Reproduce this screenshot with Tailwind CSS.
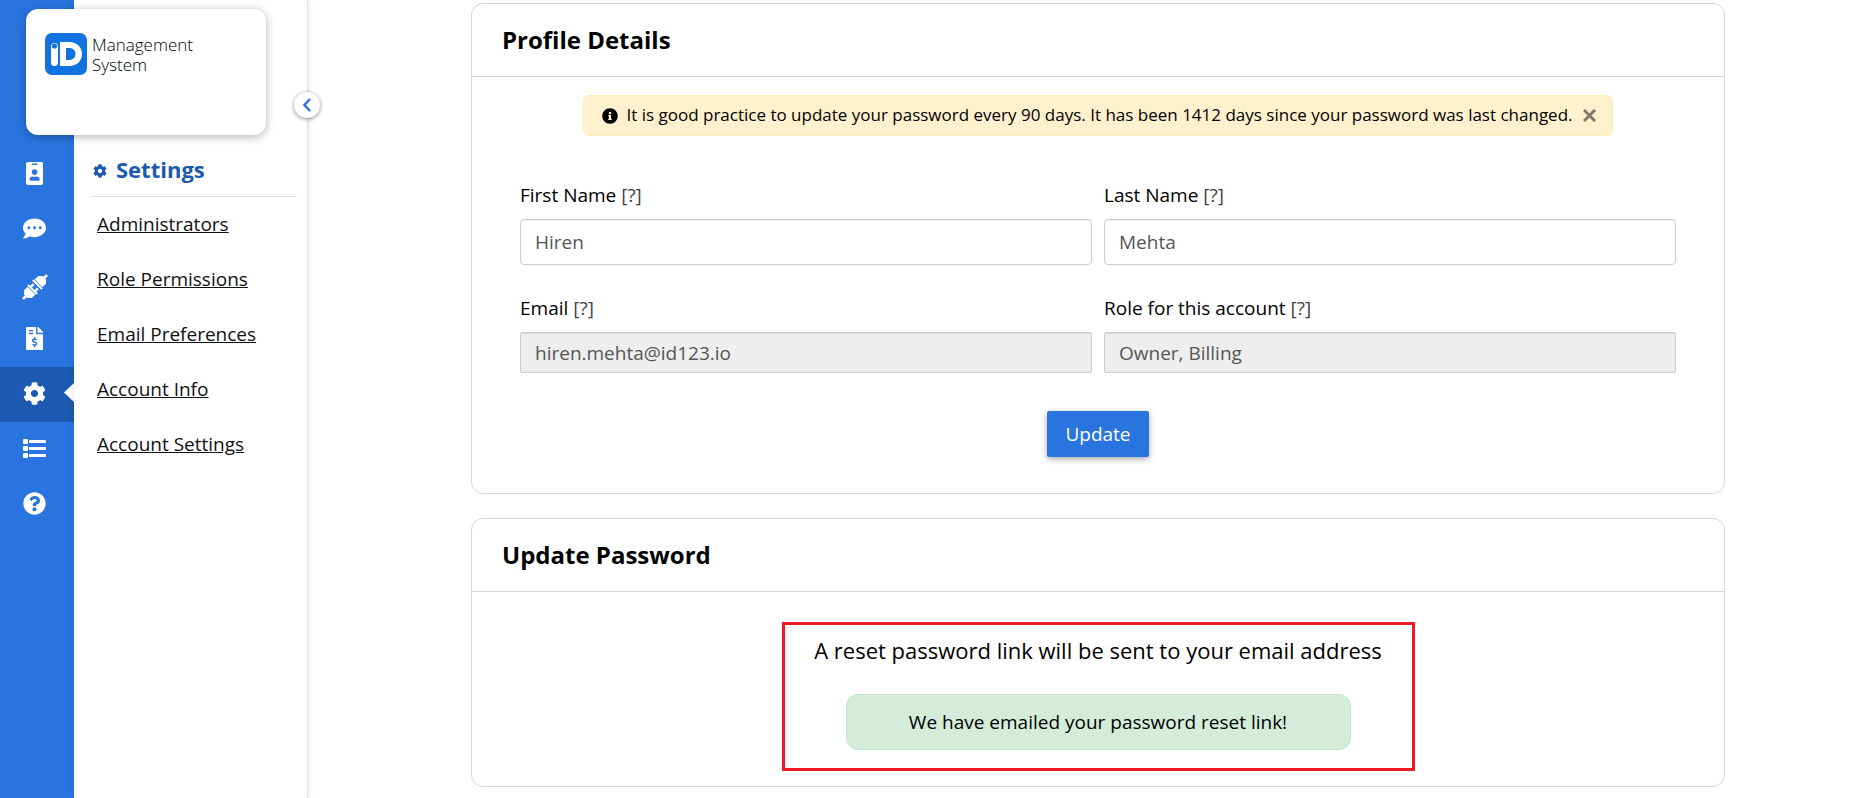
<!DOCTYPE html>
<html lang="en">
<head>
<meta charset="utf-8">
<meta name="viewport" content="width=device-width, initial-scale=1">
<title>Profile Details</title>
<script src="https://cdn.jsdelivr.net/npm/@tailwindcss/browser@4"></script>
</head>
<body class="bg-white font-['Open_Sans',sans-serif] text-[19px] text-black">
<div class="relative flex min-h-screen">

  <!-- Brand card, floats over both navigation columns -->
  <a href="#" aria-label="ID Management System" class="absolute left-[26px] top-[9px] z-20 flex h-[126px] w-[240px] items-start gap-[5px] rounded-xl bg-white pl-[19px] pt-6 shadow-[0_2px_10px_rgba(0,0,0,0.3)]">
    <svg class="size-[42px] shrink-0" viewBox="0 0 42 42" aria-hidden="true">
      <rect width="42" height="42" rx="7" fill="#1173e2"/>
      <rect x="6" y="10" width="7" height="23" rx="3.500" fill="#fff"/>
      <circle cx="9.500" cy="13" r="2.600" fill="#1173e2"/>
      <path fill="#fff" fill-rule="evenodd" d="M15 9h9c8 0 13 5 13 12s-5 12-13 12h-9zM21 15v12h3c4 0 6.500-2.500 6.500-6s-2.500-6-6.500-6z"/>
    </svg>
    <span class="pt-[2px] text-[17px] font-light leading-5 text-black">Management<br>System</span>
  </a>

  <nav aria-label="Main" class="w-[74px] shrink-0 bg-[#2a74e0] pt-[147px] text-white">
    <a href="#" aria-label="IDs" class="flex h-[55px] items-center justify-center pr-[5px] pb-[2px]">
      <svg class="h-[23px]" viewBox="0 0 384 512" fill="currentColor"><path d="M336 0H48C21.500 0 0 21.500 0 48v416c0 26.500 21.500 48 48 48h288c26.500 0 48-21.500 48-48V48c0-26.500-21.500-48-48-48zM144 32h96c8.800 0 16 7.200 16 16s-7.200 16-16 16h-96c-8.800 0-16-7.200-16-16s7.200-16 16-16zm48 128c35.300 0 64 28.700 64 64s-28.700 64-64 64-64-28.700-64-64 28.700-64 64-64zm112 236.800c0 10.600-10 19.200-22.400 19.200H102.400C90 416 80 407.400 80 396.800v-19.200c0-31.800 30.100-57.600 67.200-57.600h5c12.300 5.100 25.700 8 39.800 8s27.600-2.900 39.800-8h5c37.100 0 67.200 25.800 67.200 57.600v19.200z"/></svg>
    </a>
    <a href="#" aria-label="Messages" class="flex h-[55px] items-center justify-center pr-[5px] pb-[2px]">
      <svg class="h-[23px]" viewBox="0 0 512 512" fill="currentColor"><path d="M256 32C114.600 32 0 125.100 0 240c0 49.600 21.400 95 57 130.700C44.500 421.100 2.700 466 2.200 466.500c-2.200 2.300-2.800 5.700-1.500 8.700S4.800 480 8 480c66.300 0 116-31.800 140.600-51.400 32.700 12.300 69 19.400 107.400 19.400 141.400 0 256-93.100 256-208S397.400 32 256 32zM128 272c-17.700 0-32-14.300-32-32s14.300-32 32-32 32 14.300 32 32-14.300 32-32 32zm128 0c-17.700 0-32-14.300-32-32s14.300-32 32-32 32 14.300 32 32-14.300 32-32 32zm128 0c-17.700 0-32-14.300-32-32s14.300-32 32-32 32 14.300 32 32-14.300 32-32 32z"/></svg>
    </a>
    <a href="#" aria-label="Integrations" class="flex h-[55px] items-center justify-center pr-[5px] pt-1">
      <svg class="size-[26px]" viewBox="0 0 26 26" aria-hidden="true"><g transform="rotate(-45 13 13)" fill="#fff"><rect x="-4" y="11.700" width="6" height="2.600"/><path d="M0 10.500 3 7.500h5v11H3l-3-3zM8.500 6.500h2v13h-2zM10.500 8.700h3.500v2.500h-3.500zM10.500 14.800h3.500v2.500h-3.500z"/><path d="M15.500 6.500h2v13h-2zM18 7.500h5l3 3v5l-3 3h-5z"/><rect x="24" y="11.700" width="6" height="2.600"/></g></svg>
    </a>
    <a href="#" aria-label="Billing" class="flex h-[55px] items-center justify-center pr-[5px] pb-[2px]">
      <svg class="h-[23px]" viewBox="0 0 384 512" fill="currentColor"><path d="M377 105L279.100 7c-4.500-4.500-10.600-7-17-7H256v128h128v-6.100c0-6.300-2.500-12.400-7-16.900zm-153 31V0H24C10.700 0 0 10.700 0 24v464c0 13.300 10.700 24 24 24h336c13.300 0 24-10.700 24-24V160H248c-13.200 0-24-10.800-24-24zM64 72c0-4.420 3.580-8 8-8h80c4.420 0 8 3.580 8 8v16c0 4.420-3.580 8-8 8H72c-4.420 0-8-3.580-8-8V72zm0 80v-16c0-4.420 3.580-8 8-8h80c4.420 0 8 3.580 8 8v16c0 4.420-3.580 8-8 8H72c-4.420 0-8-3.580-8-8zm144 263.880V440c0 4.420-3.580 8-8 8h-16c-4.420 0-8-3.580-8-8v-24.290c-11.290-.58-22.270-4.520-31.370-11.350-3.900-2.930-4.100-8.770-.57-12.140l11.750-11.210c2.770-2.640 6.890-2.760 10.130-.73 3.870 2.420 8.260 3.720 12.820 3.720h28.110c6.500 0 11.800-5.920 11.800-13.190 0-5.950-3.610-11.190-8.770-12.730l-45-13.500c-18.590-5.580-31.580-23.420-31.580-43.390 0-24.520 19.050-44.440 42.670-45.070V232c0-4.420 3.580-8 8-8h16c4.420 0 8 3.580 8 8v24.290c11.290.58 22.270 4.510 31.370 11.350 3.900 2.930 4.100 8.770.57 12.140l-11.750 11.210c-2.770 2.640-6.890 2.760-10.130.73-3.870-2.430-8.260-3.720-12.820-3.720h-28.110c-6.500 0-11.800 5.920-11.800 13.190 0 5.950 3.610 11.190 8.770 12.730l45 13.500c18.590 5.580 31.580 23.420 31.580 43.390 0 24.530-19.050 44.440-42.670 45.070z"/></svg>
    </a>
    <a href="#" aria-label="Settings" aria-current="page" class="relative flex h-[55px] items-center justify-center bg-[#1c59b0] pr-[5px] pb-[2px]">
      <svg class="h-[23px]" viewBox="0 0 512 512" fill="currentColor"><path d="M487.400 315.700l-42.600-24.600c4.300-23.200 4.300-47 0-70.200l42.600-24.600c4.900-2.800 7.100-8.600 5.500-14-11.100-35.600-30-67.800-54.700-94.600-3.800-4.100-10-5.100-14.800-2.300L380.800 110c-17.900-15.400-38.500-27.300-60.800-35.100V25.800c0-5.600-3.900-10.500-9.400-11.700-36.700-8.200-74.300-7.800-109.200 0-5.500 1.200-9.400 6.100-9.400 11.700V75c-22.200 7.900-42.800 19.800-60.800 35.100L88.700 85.500c-4.900-2.800-11-1.900-14.800 2.300-24.700 26.700-43.600 58.900-54.700 94.600-1.700 5.400.6 11.200 5.500 14L67.300 221c-4.300 23.200-4.300 47 0 70.200l-42.600 24.600c-4.900 2.800-7.100 8.600-5.500 14 11.100 35.600 30 67.800 54.700 94.600 3.800 4.100 10 5.100 14.800 2.300l42.600-24.600c17.900 15.400 38.500 27.300 60.800 35.100v49.200c0 5.600 3.900 10.500 9.400 11.700 36.700 8.200 74.300 7.800 109.200 0 5.500-1.200 9.400-6.100 9.400-11.700v-49.200c22.200-7.900 42.800-19.800 60.800-35.100l42.600 24.600c4.900 2.800 11 1.900 14.800-2.300 24.700-26.700 43.600-58.900 54.700-94.600 1.500-5.500-.7-11.300-5.600-14.100zM256 336c-44.100 0-80-35.900-80-80s35.900-80 80-80 80 35.900 80 80-35.900 80-80 80z"/></svg>
      <svg class="absolute right-0 top-4 h-[19px] w-[10px]" viewBox="0 0 10 19" fill="#fff" aria-hidden="true"><path d="M10 0v19L0 9.500z"/></svg>
    </a>
    <a href="#" aria-label="Logs" class="flex h-[55px] items-center justify-center pr-[5px] pb-[2px]">
      <svg class="size-[23px]" viewBox="0 0 23 23" fill="currentColor"><rect y="2" width="5" height="5" rx="1"/><rect y="9" width="5" height="5" rx="1"/><rect y="16" width="5" height="5" rx="1"/><rect x="6" y="3" width="17" height="3" rx=".7"/><rect x="6" y="10" width="17" height="3" rx=".7"/><rect x="6" y="17" width="17" height="3" rx=".7"/></svg>
    </a>
    <a href="#" aria-label="Help" class="flex h-[55px] items-center justify-center pr-[5px] pb-[2px]">
      <svg class="h-[23px]" viewBox="0 0 512 512" fill="currentColor"><path d="M504 256c0 136.997-111.043 248-248 248S8 392.997 8 256C8 119.083 119.043 8 256 8s248 111.083 248 248zM262.655 90c-54.497 0-89.255 22.957-116.549 63.758-3.536 5.286-2.353 12.415 2.715 16.258l34.699 26.310c5.205 3.947 12.621 3.008 16.665-2.122 17.864-22.658 30.113-35.797 57.303-35.797 20.429 0 45.698 13.148 45.698 32.958 0 14.976-12.363 22.667-32.534 33.976C247.128 238.528 216 254.941 216 296v4c0 6.627 5.373 12 12 12h56c6.627 0 12-5.373 12-12v-1.333c0-28.462 83.186-29.647 83.186-106.667 0-58.002-60.165-102-116.531-102zM256 338c-25.365 0-46 20.635-46 46 0 25.364 20.635 46 46 46s46-20.636 46-46c0-25.365-20.635-46-46-46z"/></svg>
    </a>
  </nav>

  <aside class="relative w-[234px] shrink-0 border-r border-[#e3e3e3] pl-[19px] pr-[10px] pt-[150px] shadow-[0_0_6px_rgba(0,0,0,0.12)]">
    <h2 class="flex h-[47px] items-start gap-[9px] border-b border-[#e0e0e0] text-[22px] leading-[38px] font-bold text-[#1c59b0]">
      <svg class="mt-[14px] size-[14px]" viewBox="0 0 512 512" fill="currentColor" aria-hidden="true"><path d="M487.400 315.700l-42.600-24.600c4.300-23.200 4.300-47 0-70.200l42.600-24.600c4.900-2.800 7.100-8.600 5.500-14-11.100-35.600-30-67.800-54.700-94.600-3.800-4.100-10-5.100-14.800-2.300L380.800 110c-17.900-15.400-38.500-27.300-60.800-35.100V25.800c0-5.600-3.900-10.500-9.400-11.700-36.700-8.200-74.300-7.800-109.200 0-5.500 1.200-9.400 6.100-9.400 11.700V75c-22.200 7.900-42.800 19.800-60.800 35.100L88.700 85.500c-4.900-2.800-11-1.900-14.800 2.300-24.700 26.700-43.600 58.900-54.700 94.600-1.700 5.400.6 11.200 5.500 14L67.300 221c-4.300 23.200-4.300 47 0 70.200l-42.600 24.600c-4.900 2.800-7.100 8.600-5.500 14 11.100 35.600 30 67.800 54.700 94.600 3.800 4.100 10 5.100 14.800 2.300l42.600-24.600c17.900 15.400 38.500 27.300 60.800 35.100v49.200c0 5.600 3.900 10.500 9.400 11.700 36.700 8.200 74.300 7.800 109.200 0 5.500-1.200 9.400-6.100 9.400-11.700v-49.200c22.200-7.900 42.800-19.800 60.800-35.100l42.600 24.600c4.900 2.800 11 1.900 14.800-2.300 24.700-26.700 43.600-58.900 54.700-94.600 1.500-5.500-.7-11.300-5.600-14.100zM256 336c-44.100 0-80-35.900-80-80s35.900-80 80-80 80 35.900 80 80-35.900 80-80 80z"/></svg>
      Settings
    </h2>
    <ul class="pl-1 leading-[55px] text-[#111]">
      <li><a href="#" class="underline">Administrators</a></li>
      <li><a href="#" class="underline">Role Permissions</a></li>
      <li><a href="#" class="underline">Email Preferences</a></li>
      <li><a href="#" class="underline">Account Info</a></li>
      <li><a href="#" class="underline">Account Settings</a></li>
    </ul>
    <button type="button" aria-label="Collapse menu" class="absolute -right-[13px] top-[92px] flex size-[26px] items-center justify-center rounded-full bg-white shadow-[0_1px_4px_rgba(0,0,0,0.45)]">
      <svg class="h-[14px] w-2" viewBox="0 0 8 14" fill="none" stroke="#2a74e0" stroke-width="2.500" aria-hidden="true"><path d="M7 1 1.500 7 7 13"/></svg>
    </button>
  </aside>

  <main class="flex min-w-0 flex-1 flex-col gap-6 pl-[163px] pr-[129px] pt-[3px]">
    <section class="rounded-xl border border-[#d6d6d6]">
      <h1 class="border-b border-[#d6d6d6] px-[30px] text-2xl leading-[72px] font-bold">Profile Details</h1>
      <div class="px-12 pt-[18px] pb-9">
        <div role="alert" class="mx-auto flex min-h-[41px] w-fit items-center rounded-md border border-[#ffeeba] bg-[#fff1cd] pl-[18px] pr-4 text-[17px]">
          <svg class="mr-2 size-4 shrink-0" viewBox="0 0 512 512" aria-hidden="true"><path d="M256 8C119.043 8 8 119.083 8 256c0 136.997 111.043 248 248 248s248-111.003 248-248C504 119.083 392.957 8 256 8zm0 110c23.196 0 42 18.804 42 42s-18.804 42-42 42-42-18.804-42-42 18.804-42 42-42zm56 254c0 6.627-5.373 12-12 12h-88c-6.627 0-12-5.373-12-12v-24c0-6.627 5.373-12 12-12h12v-64h-12c-6.627 0-12-5.373-12-12v-24c0-6.627 5.373-12 12-12h64c6.627 0 12 5.373 12 12v100h12c6.627 0 12 5.373 12 12v24z"/></svg>
          <span class="pb-[2px]">It is good practice to update your password every 90 days. It has been 1412 days since your password was last changed.</span>
          <button type="button" aria-label="Dismiss" class="ml-[10px] text-[#7f7867]"><svg class="size-[13px]" viewBox="0 0 13 13" stroke="currentColor" stroke-width="3" aria-hidden="true"><path d="m1 1 11 11M12 1 1 12"/></svg></button>
        </div>
        <form class="mt-10">
          <div class="grid grid-cols-2 gap-x-3">
            <div>
              <label for="first" class="mb-[5px] block leading-[38px]">First Name <span class="text-[#444]">[?]</span></label>
              <input id="first" type="text" value="Hiren" class="block h-[46px] w-full rounded border border-[#ccc] px-[14px] text-[#555] shadow-[inset_0_1px_1px_rgba(0,0,0,0.08)]">
            </div>
            <div>
              <label for="last" class="mb-[5px] block leading-[38px]">Last Name <span class="text-[#444]">[?]</span></label>
              <input id="last" type="text" value="Mehta" class="block h-[46px] w-full rounded border border-[#ccc] px-[14px] text-[#555] shadow-[inset_0_1px_1px_rgba(0,0,0,0.08)]">
            </div>
            <div class="mt-6">
              <label for="email" class="mb-[5px] block leading-[38px]">Email <span class="text-[#444]">[?]</span></label>
              <input id="email" type="email" value="hiren.mehta@id123.io" readonly class="block h-[41px] w-full rounded-xs border border-[#ccc] bg-[#eee] px-[14px] text-[#555] shadow-[inset_0_1px_1px_rgba(0,0,0,0.08)]">
            </div>
            <div class="mt-6">
              <label for="role" class="mb-[5px] block leading-[38px]">Role for this account <span class="text-[#444]">[?]</span></label>
              <input id="role" type="text" value="Owner, Billing" readonly class="block h-[41px] w-full rounded-xs border border-[#ccc] bg-[#eee] px-[14px] text-[#555] shadow-[inset_0_1px_1px_rgba(0,0,0,0.08)]">
            </div>
          </div>
          <button type="submit" class="mx-auto mt-[38px] block h-[46px] rounded-xs bg-[#2a74e0] px-[18px] text-white shadow-[0_2px_6px_rgba(0,0,0,0.35)]">Update</button>
        </form>
      </div>
    </section>

    <section class="rounded-xl border border-[#d6d6d6]">
      <h2 class="border-b border-[#d6d6d6] px-[30px] text-2xl leading-[72px] font-bold">Update Password</h2>
      <div class="pt-[30px] pb-[15px]">
        <div class="mx-auto flex w-[633px] flex-col items-center border-3 border-[#ed1c24] pt-[5px] pb-[18px]">
          <p class="text-[22px] leading-10">A reset password link will be sent to your email address</p>
          <p role="status" class="mt-6 w-[505px] rounded-xl border border-[#c3e6cb] bg-[#d4edda] text-center leading-[54px]">We have emailed your password reset link!</p>
        </div>
      </div>
    </section>
  </main>
</div>
</body>
</html>
